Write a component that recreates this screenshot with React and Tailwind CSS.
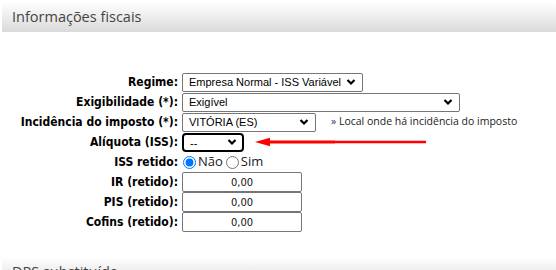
import { useState } from 'react'

function Chevron() {
  return (
    <svg
      className="pointer-events-none absolute right-[7px] top-1/2 -translate-y-1/2"
      width="10"
      height="7"
      viewBox="0 0 10 7"
    >
      <path d="M1.5 1.5 L5 5 L8.5 1.5" fill="none" stroke="#000" strokeWidth="2.2" />
    </svg>
  )
}

function Select({ value, width, focused }) {
  return (
    <div className="relative" style={{ width }}>
      <select
        defaultValue={value}
        className={`block h-[19px] w-full appearance-none bg-white pl-[6px] font-['Liberation_Sans',Arial,sans-serif] text-[11px] text-black outline-none ${
          focused
            ? 'rounded-[4px] border-2 border-black pl-[5px]'
            : 'rounded-[2px] border border-[#767676]'
        }`}
      >
        <option>{value}</option>
      </select>
      <Chevron />
    </div>
  )
}

function Label({ children }) {
  return (
    <div className="flex h-[20px] items-center justify-end font-['DejaVu_Sans_Condensed','DejaVu_Sans',sans-serif] text-[12px] font-bold text-black">
      {children}
    </div>
  )
}

function Money() {
  return (
    <input
      defaultValue="0,00"
      className="block h-[20px] w-[120px] rounded-[2px] border border-[#767676] bg-white text-center font-['DejaVu_Sans_Condensed','DejaVu_Sans',sans-serif] text-[11px] text-[#111] outline-none"
    />
  )
}

export default function App() {
  const [retido, setRetido] = useState('nao')

  return (
    <div className="h-[270px] w-[556px] overflow-hidden bg-white">
      {/* cabeçalho */}
      <div className="ml-[2px] mt-[2px] flex h-[30px] items-center bg-gradient-to-b from-white to-[#dadada] pl-[10px] font-['Open_Sans',sans-serif] text-[14.5px] text-[#444]">
        Informações fiscais
      </div>

      <div className="mt-[40px] grid grid-cols-[178px_auto] gap-x-1">
        <Label>Regime:</Label>
        <div className="flex h-[20px] items-center">
          <Select value="Empresa Normal - ISS Variável" width={181} />
        </div>

        <Label>Exigibilidade (*):</Label>
        <div className="flex h-[20px] items-center">
          <Select value="Exigível" width={278} />
        </div>

        <Label>Incidência do imposto (*):</Label>
        <div className="flex h-[20px] items-center">
          <Select value="VITÓRIA (ES)" width={134} />
          <span className="ml-[15px] font-['Open_Sans',sans-serif] text-[10.5px] text-[#222]">
            <span className="text-[#1f2f6f]">»</span> Local onde há incidência do imposto
          </span>
        </div>

        <Label>Alíquota (ISS):</Label>
        <div className="flex h-[20px] items-center">
          <Select value="--" width={62} focused />
          <svg width="175" height="10" viewBox="0 0 175 10" className="ml-[11px]">
            <path d="M0 5 L15 0.8 L15 9.2 Z" fill="#f00" />
            <path d="M14 3.4 H80 V6.6 H14 Z" fill="#f00" />
            <path d="M80 3.7 H171 V6.3 H80 Z" fill="#f00" />
          </svg>
        </div>

        <Label>ISS retido:</Label>
        <div className="flex h-[20px] items-center font-['Open_Sans',sans-serif] text-[13px] text-[#222]">
          <label className="flex items-center">
            <input
              type="radio"
              name="retido"
              checked={retido === 'nao'}
              onChange={() => setRetido('nao')}
              className="m-0 ml-[1px] mr-[2px] h-[13px] w-[13px]"
            />
            Não
          </label>
          <label className="ml-[3px] flex items-center">
            <input
              type="radio"
              name="retido"
              checked={retido === 'sim'}
              onChange={() => setRetido('sim')}
              className="m-0 mr-[2px] h-[13px] w-[13px]"
            />
            Sim
          </label>
        </div>

        <Label>IR (retido):</Label>
        <div className="flex h-[20px] items-center">
          <Money />
        </div>

        <Label>PIS (retido):</Label>
        <div className="flex h-[20px] items-center">
          <Money />
        </div>

        <Label>Cofins (retido):</Label>
        <div className="flex h-[20px] items-center">
          <Money />
        </div>
      </div>

      {/* próxima seção, cortada na borda como na tela */}
      <div className="ml-[2px] mt-[25px] flex h-[30px] items-center bg-gradient-to-b from-white to-[#dadada] pl-[10px] font-['Open_Sans',sans-serif] text-[14.5px] text-[#444]">
        DPS substituída
      </div>
    </div>
  )
}
